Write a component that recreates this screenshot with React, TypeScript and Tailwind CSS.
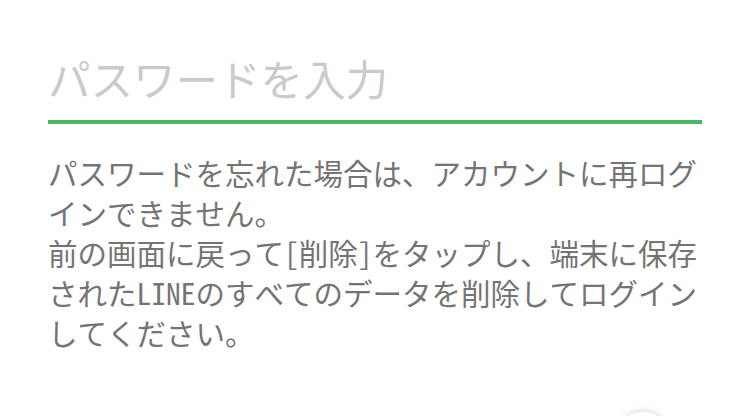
export default function App() {
  return (
    <div
      className="relative h-[416px] w-[747px] overflow-hidden bg-white"
      style={{ fontFamily: '"Noto Sans Mono CJK JP", "Noto Sans CJK JP", sans-serif' }}
    >
      <div className="px-12 pt-[50px]">
        {/* password input */}
        <div className="flex h-[56px] items-center text-[42.5px] leading-none text-[#cacaca]">
          パスワードを入力
        </div>
        <div className="mt-[14px] h-[4px] w-[654px] bg-[#4ab862]" />

        {/* notice */}
        <p className="mt-[28px] text-[29.5px] leading-[40px] whitespace-nowrap text-[#747474]">
          パスワードを忘れた場合は、アカウントに再ログ
          <br />
          インできません。
          <br />
          前の画面に戻って[削除]をタップし、端末に保存
          <br />
          されたLINEのすべてのデータを削除してログイン
          <br />
          してください。
        </p>
      </div>

      {/* floating button peeking from bottom */}
      <div className="absolute left-[615px] top-[412px] h-14 w-14 rounded-full bg-white shadow-[0_-2px_6px_rgba(0,0,0,0.12)]" />
    </div>
  )
}
